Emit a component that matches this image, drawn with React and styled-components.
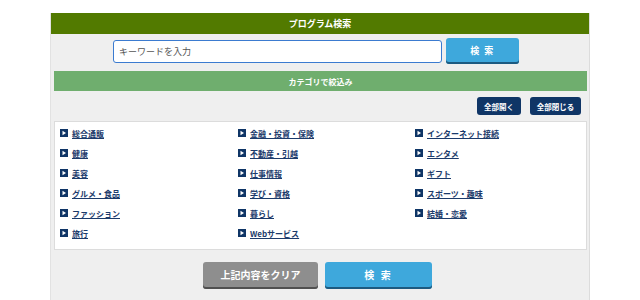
import * as React from 'react';
import styled, { createGlobalStyle } from 'styled-components';

const GlobalStyle = createGlobalStyle`
  body {
    margin: 0;
    background: #fff;
    font-family: "Noto Sans CJK JP", "Noto Sans", sans-serif;
  }
`;

const Panel = styled.div`
  width: 538px;
  min-height: 287px;
  margin: 13px auto 0;
  background: #efefef;
  border-left: 1px solid #e2e2e2;
  border-right: 1px solid #dcdcdc;
`;

const Header = styled.div`
  height: 21px;
  background: #527a00;
  color: #fff;
  font-size: 9px;
  font-weight: 700;
  display: flex;
  align-items: center;
  justify-content: center;
`;

const SearchRow = styled.div`
  display: flex;
  justify-content: center;
  align-items: center;
  gap: 4px;
  margin-top: 4px;
  padding-right: 8px;
`;

const KeywordInput = styled.input`
  box-sizing: border-box;
  width: 329px;
  height: 23px;
  border: 1px solid #3b7bd0;
  border-radius: 3px;
  padding: 0 5px;
  font-family: inherit;
  font-size: 9px;
  color: #333;
  background: #fff;
  outline: none;

  &::placeholder {
    color: #555;
  }
`;

const BlueButton = styled.button`
  box-sizing: border-box;
  width: ${(p) => p.$width}px;
  height: ${(p) => p.$height}px;
  border: none;
  border-radius: 3px;
  background: ${(p) => (p.$grey ? '#8e8e8e' : '#3ea8dc')};
  box-shadow: inset 0 -2px 0 ${(p) => (p.$grey ? '#505050' : '#1d5a80')};
  color: #fff;
  font-family: inherit;
  font-size: ${(p) => p.$size}px;
  font-weight: 700;
  letter-spacing: ${(p) => p.$spacing || 0}px;
  padding: 0 0 2px;
  cursor: pointer;
`;

const Inner = styled.div`
  margin: 7px 2px 0 3px;
`;

const CategoryBar = styled.div`
  height: 20px;
  background: #6fae6e;
  color: #fff;
  font-size: 8px;
  font-weight: 700;
  display: flex;
  align-items: center;
  justify-content: center;
`;

const ToggleRow = styled.div`
  display: flex;
  justify-content: flex-end;
  gap: 9px;
  margin-top: 6px;
  padding-right: 6px;
`;

const ToggleButton = styled.button`
  height: 18px;
  width: ${(p) => p.$width}px;
  border: none;
  border-radius: 3px;
  background: #0f3566;
  color: #fff;
  font-family: inherit;
  font-size: 7.5px;
  font-weight: 700;
  padding: 0;
`;

const ListBox = styled.div`
  margin-top: 6px;
  background: #fff;
  border: 1px solid #dcdcdc;
  padding: 1px 0 6px 5px;
  display: grid;
  grid-template-columns: 178px 177px 1fr;
  grid-template-rows: repeat(6, 20px);
`;

const Item = styled.a`
  display: flex;
  align-items: center;
  gap: 4px;
  color: #1b3a6b;
  font-size: 8px;
  font-weight: 700;
  text-decoration: underline;
  text-underline-offset: 1px;
`;

const BottomRow = styled.div`
  display: flex;
  justify-content: center;
  gap: 7px;
  margin-top: 12px;
  padding-right: 5px;
`;

const Marker = () => (
  <svg width="8" height="8" viewBox="0 0 8 8">
    <rect width="8" height="8" fill="#0f3566" />
    <path d="M2.5 1.8 L6 4 L2.5 6.2 Z" fill="#fff" />
  </svg>
);

const columns = [
  ['総合通販', '健康', '美容', 'グルメ・食品', 'ファッション', '旅行'],
  ['金融・投資・保険', '不動産・引越', '仕事情報', '学び・資格', '暮らし', 'Webサービス'],
  ['インターネット接続', 'エンタメ', 'ギフト', 'スポーツ・趣味', '結婚・恋愛'],
];

export default function App() {
  return (
    <>
      <GlobalStyle />
      <Panel>
        <Header>プログラム検索</Header>
        <SearchRow>
          <KeywordInput placeholder="キーワードを入力" />
          <BlueButton $width={73} $height={26} $size={9} $spacing={1.5}>
            検 索
          </BlueButton>
        </SearchRow>
        <Inner>
          <CategoryBar>カテゴリで絞込み</CategoryBar>
          <ToggleRow>
            <ToggleButton $width={44}>全部開く</ToggleButton>
            <ToggleButton $width={51}>全部閉じる</ToggleButton>
          </ToggleRow>
          <ListBox>
            {columns.map((col, ci) =>
              col.map((label, ri) => (
                <Item
                  key={label}
                  href="#"
                  style={{ gridColumn: ci + 1, gridRow: ri + 1 }}
                >
                  <Marker />
                  {label}
                </Item>
              ))
            )}
          </ListBox>
        </Inner>
        <BottomRow>
          <BlueButton $grey $width={115} $height={27} $size={10}>
            上記内容をクリア
          </BlueButton>
          <BlueButton $width={107} $height={27} $size={10} $spacing={2}>
            検 索
          </BlueButton>
        </BottomRow>
      </Panel>
    </>
  );
}
